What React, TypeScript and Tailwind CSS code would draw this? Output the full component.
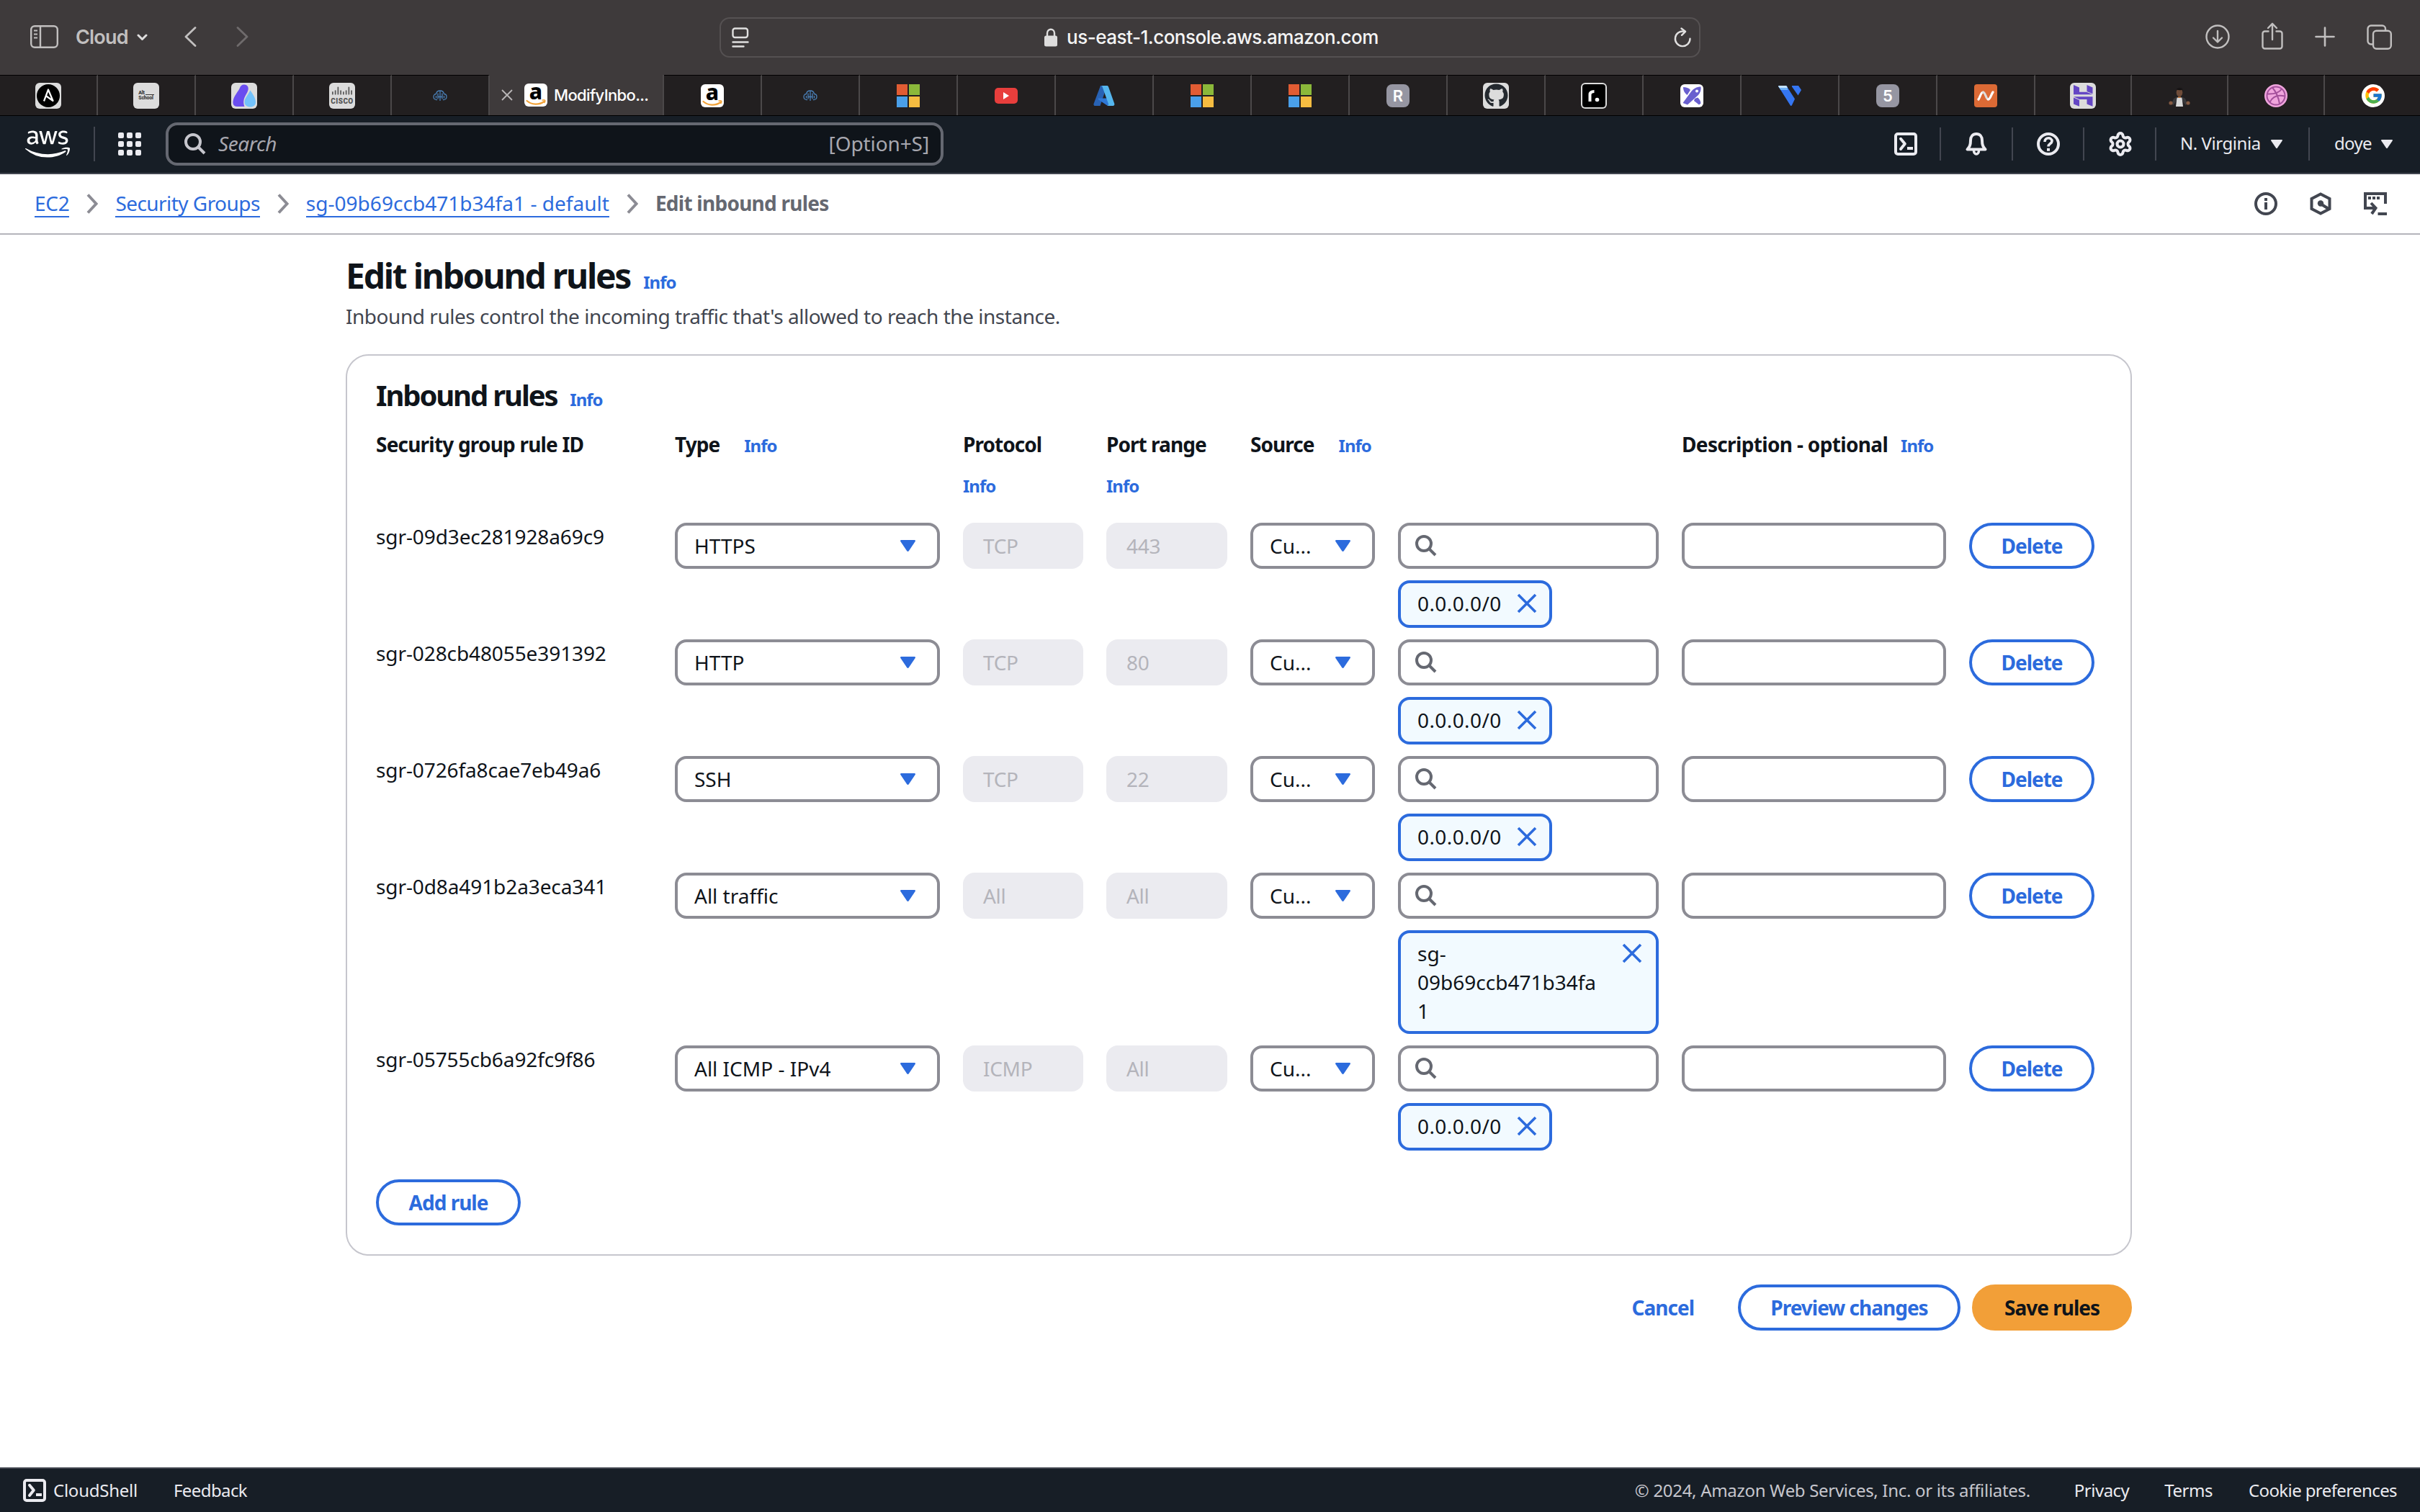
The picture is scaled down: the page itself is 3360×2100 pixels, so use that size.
import type { ReactNode } from "react";
import { FaAws, FaGithub } from "react-icons/fa";
import { FcGoogle } from "react-icons/fc";
import { Settings } from "lucide-react";

/* ---------- Favicons ---------- */

function Tile({ children, className = "" }: { children: ReactNode; className?: string }) {
  return (
    <span className={`flex size-9 items-center justify-center overflow-hidden rounded-[6px] bg-[#dcdcdc] ${className}`}>
      {children}
    </span>
  );
}

const Ansible = () => (
  <Tile>
    <svg viewBox="0 0 36 36" className="size-9">
      <circle cx="18" cy="18" r="16" fill="#000" />
      <path d="M12 25.5 18 9.5 24.5 25 14 17.5" fill="none" stroke="#fff" strokeWidth="2.2" strokeLinejoin="round" />
    </svg>
  </Tile>
);

const AltSchool = () => (
  <Tile>
    <span className="flex flex-col items-start font-[Roboto] text-[7px] leading-[7px] font-extrabold tracking-[-0.2px] text-[#333]">
      <span className="flex items-end">
        Alt<span className="mb-[1px] ml-[1px] h-[1px] w-[12px] bg-[#333]" />
      </span>
      <span>School</span>
    </span>
  </Tile>
);

const Drop = () => (
  <Tile>
    <svg viewBox="0 0 36 36" className="size-9">
      <path d="M18 2.5c4 0 6.500 3 5.600 7-1 5-5.600 9-6.300 16-.2 3 .2 5 1.200 7.500H8c-4 0-6-3-5.500-7C3.500 18 10 12 12 7c1-3 3-4.500 6-4.500Z" fill="#6a4df0" />
      <path d="M26.500 10.500C30 16 34 21 34 27c0 4-3 6.500-7.500 6.500S18.500 31 18.500 27c0-6 5-10 8-16.500Z" fill="#73c2fb" />
    </svg>
  </Tile>
);

const Cisco = () => (
  <Tile>
    <span className="flex flex-col items-center gap-[3px]">
      <svg viewBox="0 0 32 13" className="h-[13px] w-[30px]" stroke="#555" strokeWidth="1.800" strokeLinecap="round">
        <path d="M2 8v3M6 6v5M10 1v10M14 6v5M18 8v3M22 6v5M26 1v10M30 6v5" />
      </svg>
      <span className="font-[Roboto] text-[10px] leading-[9px] font-black tracking-[0.4px] text-[#555]">CISCO</span>
    </span>
  </Tile>
);

const CloudBrain = () => (
  <svg viewBox="0 0 20 16" className="h-4 w-5" fill="none" stroke="#4a80b8" strokeWidth="1.300">
    <path d="M6 13.500C3 14 1 12 1 9.500S2.500 5.500 4.500 5.500C5 2.500 7.500 1 10 1s5 1.500 5.500 4.500c2 0 3.500 1.500 3.500 4s-2 4.500-5 4" />
    <path d="M10 1v14M7 4.500v8M13 4.500v8M4.500 8v3.500M15.500 8v3.500M7 9.500h6" />
  </svg>
);

const Amazon = () => (
  <span className="flex size-8 items-center justify-center rounded-[6px] bg-white">
    <svg viewBox="0 0 32 32" className="size-8 overflow-visible">
      <text x="16" y="22" textAnchor="middle" fontFamily="Noto Sans" fontWeight="800" fontSize="30" fill="#000">
        a
      </text>
      <path d="M3.500 24c7 6 17 6 24 1" fill="none" stroke="#f2a33a" strokeWidth="2.200" strokeLinecap="round" />
      <path d="M24.500 23.200c2-.6 3.500-.5 4 0s0 2.300-1 3.800" fill="none" stroke="#f2a33a" strokeWidth="1.600" />
    </svg>
  </span>
);

const Microsoft = () => (
  <span className="grid size-8 grid-cols-2 gap-[2px]">
    <span className="bg-[#e15c33]" />
    <span className="bg-[#8bb83a]" />
    <span className="bg-[#4a9fe9]" />
    <span className="bg-[#f5bc41]" />
  </span>
);

const YouTube = () => (
  <span className="flex h-[22px] w-8 items-center justify-center rounded-[5px] bg-[#e83e3c]">
    <svg viewBox="0 0 8 10" className="h-[10px] w-2" fill="#fff">
      <path d="M0 0 8 5 0 10Z" />
    </svg>
  </span>
);

const Azure = () => (
  <svg viewBox="0 0 30 28" className="h-7 w-[30px]">
    <path d="M10 0h9L9.500 28H2.500C1 28 0 26.500.600 25Z" fill="#2862b4" />
    <path d="M7 17.500h12l4 9-3 1.500L6.500 19Z" fill="#2f78d6" />
    <path d="M11.500 0H19c1 0 1.600.600 2 1.500L29.300 25c.5 1.500-.5 3-2 3h-8c1.500-.3 2-1.500 1.600-3L12.500 1.500C12.300.8 12 .3 11.500 0Z" fill="#55b6ee" />
  </svg>
);

const Letter = ({ children }: { children: string }) => (
  <span className="flex size-8 items-center justify-center rounded-[8px] bg-[#9696a2] font-[Inter] text-[22px] leading-none font-semibold text-white">
    {children}
  </span>
);

const GitHub = () => (
  <Tile>
    <FaGithub className="size-[33px] text-[#24292f]" />
  </Tile>
);

const RDot = () => (
  <Tile>
    <span className="flex size-8 items-center justify-center rounded-[4px] bg-black">
      <svg viewBox="0 0 32 32" className="size-8" fill="none" stroke="#fff" strokeWidth="4">
        <path d="M10.500 24V14.500c0-3 2-4.500 6-4.500" />
        <circle cx="20.500" cy="21.500" r="2.800" fill="#fff" stroke="none" />
      </svg>
    </span>
  </Tile>
);

const XMark = () => (
  <span className="flex size-8 overflow-hidden rounded-[6px] bg-white">
    <svg viewBox="0 0 32 32" className="size-8">
      <path d="M4 4c4 0 8 1 10 4l-4.500 7C5.500 12 4 8 4 4Z" fill="#6a60cf" />
      <path d="M20 20l4-1.500c2 1.500 4 4 4.500 8L26 28.500 19 23Z" fill="#6a60cf" />
      <path d="M28.500 3.500c.5 4-.5 8-3.500 11.500L10 28.500 3.500 26 14.500 11c3.500-5 8-7.500 14-7.500Z" fill="#6a60cf" />
      <circle cx="23" cy="9.500" r="2" fill="#fff" />
    </svg>
  </span>
);

const VMark = () => (
  <svg viewBox="0 0 32 28" className="h-7 w-8">
    <path d="M1 0h9c1 0 1.800.5 2.200 1.500L23 18.500 19 27c-.5 1.200-2 1.200-2.500 0L.5 1.500C0 .5.500 0 1 0Z" fill="#3576f2" />
    <path d="M1 0h9c1 0 1.800.5 2.200 1.500L13.500 6H3.300L.5 1.500C0 .5.500 0 1 0Z" fill="#6fb2f8" />
    <path d="M1 0h9c1 0 1.800.5 2.200 1.500L12.700 3H1.500L.5 1.500C0 .5.500 0 1 0Z" fill="#c4e2fc" />
    <path d="M20 0h8l4 6-4.500 7.500L19 1.500C18.500.5 19 0 20 0Z" fill="#3576f2" />
  </svg>
);

const NMark = () => (
  <span className="flex size-8 items-center justify-center rounded-[4px] bg-[#dc6a35]">
    <svg viewBox="0 0 24 14" className="h-[14px] w-6" fill="none" strokeLinecap="round" strokeLinejoin="round" strokeWidth="3.200">
      <path d="M2 12C4 10 5 2 8.500 2" stroke="#fff" />
      <path d="M8.500 2C11.500 2 12.500 12 15.500 12" stroke="#ddd" />
      <path d="M15.500 12C18.500 12 20 4 22 2" stroke="#fff" />
    </svg>
  </span>
);

const Hostinger = () => (
  <Tile>
    <svg viewBox="0 0 36 36" className="size-9" fill="#6446c4">
      <path d="M5 3l8 3.500v6.200h10l8.500 3.600H5Z" />
      <path d="M23.500 3l8 3.500v8.800l-8-3.300Z" />
      <path d="M5 19.300h26.500v13.500l-8-3.300V23H13Z" />
      <path d="M5 20.500l8 3.500v8.800l-8-3.300Z" />
    </svg>
  </Tile>
);

const Person = () => (
  <svg viewBox="0 0 32 28" className="h-7 w-8 translate-y-[2px]">
    <path d="M12 3c0-3 8-3.500 8.500 0v3H12Z" fill="#1d1a1b" />
    <ellipse cx="16" cy="7.500" rx="4.300" ry="5.500" fill="#6f4c39" />
    <path d="M12 3.500c1-2.500 7-2.500 8.300 0-2 1-6 1-8.300 0Z" fill="#141213" />
    <path d="M12.500 14.500h7l1.500 12.500H11Z" fill="#d9d9d9" />
    <path d="M12.500 13.500 8 16l-3 7 2.500 2 4-5Z" fill="#39383b" />
    <path d="M19.500 13.500 24 16l3 7-2.500 2-4-5Z" fill="#39383b" />
    <circle cx="4" cy="22" r="2.600" fill="#855a42" />
    <circle cx="28" cy="22" r="2.600" fill="#855a42" />
    <path d="M14 13.500h4v1.500h-4Z" fill="#c97a3f" />
  </svg>
);

const Dribbble = () => (
  <svg viewBox="0 0 32 32" className="size-8">
    <circle cx="16" cy="16" r="16" fill="#f0a5dd" />
    <g fill="none" stroke="#a3509b" strokeWidth="2">
      <circle cx="16" cy="16" r="12.500" />
      <path d="M11 4.500c5 6 8.500 13 10 22.500M3.500 13.500c9 .5 17-1.500 21-7.500M7.500 25c3.500-7.500 10.500-11 20.800-8.500" />
    </g>
  </svg>
);

const Google = () => (
  <span className="flex size-8 items-center justify-center rounded-full bg-white">
    <FcGoogle className="size-[27px]" />
  </span>
);

const leftTabs: { icon: ReactNode }[] = [
  { icon: <Ansible /> },
  { icon: <AltSchool /> },
  { icon: <Drop /> },
  { icon: <Cisco /> },
  { icon: <CloudBrain /> },
];

const midTabs: { icon: ReactNode }[] = [
  { icon: <Amazon /> },
  { icon: <CloudBrain /> },
  { icon: <Microsoft /> },
  { icon: <YouTube /> },
  { icon: <Azure /> },
  { icon: <Microsoft /> },
  { icon: <Microsoft /> },
  { icon: <Letter>R</Letter> },
  { icon: <GitHub /> },
  { icon: <RDot /> },
  { icon: <XMark /> },
  { icon: <VMark /> },
  { icon: <Letter>5</Letter> },
  { icon: <NMark /> },
];

const endTabs: { icon: ReactNode }[] = [
  { icon: <Hostinger /> },
  { icon: <Person /> },
  { icon: <Dribbble /> },
  { icon: <Google /> },
];

function Tab({ children, className }: { children: ReactNode; className: string }) {
  return (
    <div className={`flex shrink-0 items-center justify-center border-t border-r-2 border-t-black border-r-[#4b4849] bg-[#221f20] ${className}`}>
      {children}
    </div>
  );
}

/* ---------- Shared icons ---------- */

const Caret = ({ className }: { className: string }) => (
  <svg viewBox="0 0 20 16" className={className} preserveAspectRatio="none">
    <path d="M1.500 0h17c1.200 0 1.800 1 1.200 2l-8.500 13.300c-.6.900-1.800.9-2.400 0L.3 2C-.3 1 .3 0 1.500 0Z" fill="currentColor" />
  </svg>
);

const SearchIcon = ({ className }: { className: string }) => (
  <svg viewBox="0 0 30 30" className={className} fill="none" stroke="currentColor" strokeWidth="4">
    <circle cx="12" cy="12" r="10" />
    <path d="m19 19 9 9" />
  </svg>
);

const CloseIcon = () => (
  <svg viewBox="0 0 28 28" className="size-7 shrink-0 text-[#2c6bdd]" fill="none" stroke="currentColor" strokeWidth="3.600">
    <path d="m2 2 24 24M26 2 2 26" />
  </svg>
);

const TerminalIcon = () => (
  <svg viewBox="0 0 32 32" className="size-8" fill="none" stroke="#ebebf0" strokeWidth="4" strokeLinejoin="round">
    <rect x="2" y="2" width="28" height="28" rx="3" />
    <path d="m9 8.800 5.800 7L9 23" strokeLinecap="round" />
    <path d="M18 22h8" />
  </svg>
);

const Chevron = () => (
  <svg viewBox="0 0 16 28" className="h-7 w-4" fill="none" stroke="#8c8c94" strokeWidth="4">
    <path d="m2 1.500 11.500 12.500L2 26.500" />
  </svg>
);

/* ---------- Browser chrome ---------- */

function Toolbar() {
  return (
    <div className="flex h-[104px] shrink-0 items-center bg-[#3e3a3b] pb-[2px] font-[Inter,sans-serif] text-[#c1bfbf]">
      <div className="flex w-[999px] items-center pl-[42px]">
        <svg viewBox="0 0 39 32" className="h-8 w-[39px]" fill="none" stroke="currentColor" strokeWidth="2.400">
          <rect x="1.200" y="1.200" width="36.600" height="29.600" rx="5" />
          <path d="M14 1v30" />
          <path d="M5 7.500h5M5 12.500h5M5 17.500h5" strokeWidth="2" />
        </svg>
        <span className="ml-[24px] w-[85px] text-[27px] leading-none font-semibold tracking-[-0.8px]">Cloud</span>
        <svg viewBox="0 0 15 10" className="mt-[2px] h-[10px] w-[15px]" fill="none" stroke="#dedddd" strokeWidth="3" strokeLinecap="round" strokeLinejoin="round">
          <path d="m2 2 5.500 5.500L13 2" />
        </svg>
        <svg viewBox="0 0 17 28" className="ml-[51px] h-7 w-[17px]" fill="none" stroke="currentColor" strokeWidth="2.800" strokeLinecap="round" strokeLinejoin="round">
          <path d="M15 1.500 2 14l13 12.500" />
        </svg>
        <svg viewBox="0 0 17 28" className="ml-[55px] h-7 w-[17px]" fill="none" stroke="#6f6b6c" strokeWidth="2.800" strokeLinecap="round" strokeLinejoin="round">
          <path d="m2 1.500 13 12.500L2 26.500" />
        </svg>
      </div>

      <div className="mt-[2px] flex h-14 w-[1362px] items-center rounded-[14px] border-2 border-[#555152] pr-[11px] pl-[15px]">
        <svg viewBox="0 0 24 28" className="h-7 w-6" fill="none" stroke="#e0dfdf" strokeWidth="2.400" strokeLinecap="round">
          <rect x="1.500" y="1.500" width="20.500" height="12.500" rx="3" />
          <path d="M1.500 20.500h21M1.500 26.500h15" />
        </svg>
        <div className="flex flex-1 items-center justify-center">
          <svg viewBox="0 0 18 26" className="mr-[13px] h-[26px] w-[18px]">
            <path d="M4 12V7c0-7 10-7 10 0v5" fill="none" stroke="#dedddd" strokeWidth="2.400" />
            <rect x="0" y="10.500" width="18" height="15" rx="2.500" fill="#dedddd" />
          </svg>
          <span className="text-[26px] leading-none font-medium tracking-[-0.5px] text-[#f4f4f4]">us-east-1.console.aws.amazon.com</span>
        </div>
        <svg viewBox="0 0 24 28" className="h-7 w-6" fill="none" stroke="#e0dfdf" strokeWidth="2.400" strokeLinecap="round" strokeLinejoin="round">
          <path d="M14.500 5.800a10.300 10.300 0 1 0 8 10" />
          <path d="m10.500 1.500 5.500 4.300-5 5" />
        </svg>
      </div>

      <div className="flex flex-1 items-center justify-end gap-[44px] pr-[39px]">
        <svg viewBox="0 0 34 34" className="size-[34px]" fill="none" stroke="currentColor" strokeWidth="2.400" strokeLinecap="round" strokeLinejoin="round">
          <circle cx="17" cy="17" r="15.500" />
          <path d="M17 9v15M11 18.500l6 6 6-6" />
        </svg>
        <svg viewBox="0 0 30 38" className="-mt-[2px] h-[38px] w-[30px]" fill="none" stroke="currentColor" strokeWidth="2.400" strokeLinecap="round" strokeLinejoin="round">
          <path d="M9.500 12.500H4.500a3 3 0 0 0-3 3v18a3 3 0 0 0 3 3h21a3 3 0 0 0 3-3v-18a3 3 0 0 0-3-3h-5" />
          <path d="M15 24V2M9 8l6-6.200L21 8" />
        </svg>
        <svg viewBox="0 0 28 28" className="size-7" fill="none" stroke="currentColor" strokeWidth="2.600" strokeLinecap="round">
          <path d="M14 1.500v25M1.500 14h25" />
        </svg>
        <svg viewBox="0 0 35 35" className="size-[35px]" fill="none" stroke="currentColor" strokeWidth="2.400">
          <path d="M8.500 27.500H6a4.500 4.500 0 0 1-4.500-4.500V6A4.500 4.500 0 0 1 6 1.500h15.500A4.500 4.500 0 0 1 26 6v2.500" />
          <rect x="9" y="8.800" width="24.800" height="25" rx="4.500" />
        </svg>
      </div>
    </div>
  );
}

function TabBar() {
  return (
    <div className="flex h-[57px] shrink-0 border-b border-black bg-[#221f20]">
      {leftTabs.map((t, i) => (
        <Tab key={i} className="w-[136px]">
          {t.icon}
        </Tab>
      ))}
      <div className="flex w-[242px] shrink-0 items-center border-r-2 border-[#4b4849] bg-[#3e3a3b] pl-4">
        <svg viewBox="0 0 16 16" className="size-4" fill="none" stroke="#b9b6b7" strokeWidth="1.800">
          <path d="m1 1 14 14M15 1 1 15" />
        </svg>
        <span className="ml-4">
          <Amazon />
        </span>
        <span className="ml-[9px] font-[Inter,sans-serif] text-[22px] leading-none font-medium tracking-[-0.65px] text-white">ModifyInbo...</span>
      </div>
      {midTabs.map((t, i) => (
        <Tab key={i} className="w-[136px]">
          {t.icon}
        </Tab>
      ))}
      {endTabs.map((t, i) => (
        <Tab key={i} className="w-[134px] last:border-r-0">
          {t.icon}
        </Tab>
      ))}
    </div>
  );
}

/* ---------- AWS console ---------- */

const Divider = () => <span className="h-[46px] w-[2px] shrink-0 bg-[#424650]" />;

function ConsoleNav() {
  return (
    <div className="flex h-[81px] shrink-0 items-center border-b-2 border-[#424650] bg-[#171e26] pb-[1px] text-[#ebebf0]">
      <FaAws className="ml-[35px] h-[50px] w-[62px] text-white" />
      <span className="mr-8 ml-[33px]">
        <span className="block h-12 w-[2px] bg-[#424650]" />
      </span>
      <div className="grid size-8 grid-cols-3 gap-1">
        {Array.from({ length: 9 }, (_, i) => (
          <span key={i} className="size-2 rounded-[2px] bg-[#ebebf0]" />
        ))}
      </div>
      <div className="ml-[34px] flex h-[60px] w-[1080px] items-center rounded-[16px] border-4 border-[#656871] bg-[#0f141a] pr-4 pl-[22px] text-[28px] leading-none">
        <SearchIcon className="size-[30px] text-[#c6c6cd]" />
        <span className="ml-[17px] pb-[2px] tracking-[-0.4px] text-[#a7a7af] italic">Search</span>
        <span className="ml-auto pb-[2px] tracking-[-0.1px] text-[#a7a7af]">[Option+S]</span>
      </div>
      <div className="ml-auto flex items-center text-[24px] leading-none">
        <span className="flex w-[96px] justify-center pl-[2px]">
          <TerminalIcon />
        </span>
        <Divider />
        <span className="flex w-[98px] justify-center">
          <svg viewBox="0 0 32 32" className="size-8" fill="none" stroke="#ebebf0" strokeWidth="4" strokeLinejoin="round">
            <path d="M16 2c-5 0-8 4-8 9 0 7-1.500 9-4.500 12.500h25C25.500 20 24 18 24 11c0-5-3-9-8-9Z" />
            <path d="M12.500 25c0 6.500 7 6.500 7 0" strokeWidth="3.500" />
          </svg>
        </span>
        <Divider />
        <span className="flex w-[97px] justify-center">
          <svg viewBox="0 0 32 32" className="size-8" fill="none" stroke="#ebebf0" strokeWidth="4">
            <circle cx="16" cy="16" r="14" />
            <path d="M11 13c0-7 10-6.500 10-1 0 3.500-5 3.500-5 7.500" strokeWidth="3.600" />
            <path d="M16 21.800v4" />
          </svg>
        </span>
        <Divider />
        <span className="flex w-[98px] justify-center pl-[2px]">
          <Settings className="size-9" strokeWidth={2.7} />
        </span>
        <Divider />
        <span className="flex w-[211px] items-center pl-[33px]">
          <span className="w-[126px] pb-[2px] tracking-[-0.45px]">N. Virginia</span>
          <Caret className="h-3 w-4" />
        </span>
        <Divider />
        <span className="flex w-[153px] items-center pl-[34px]">
          <span className="w-[65px] pb-[2px] tracking-[-0.65px]">doye</span>
          <Caret className="h-3 w-4" />
        </span>
      </div>
    </div>
  );
}

const crumbs = [
  { label: "EC2", className: "tracking-[-0.3px]" },
  { label: "Security Groups", className: "tracking-[-0.55px]" },
  { label: "sg-09b69ccb471b34fa1 - default", className: "tracking-[0.03px]" },
];

function Breadcrumbs() {
  return (
    <div className="flex h-[84px] shrink-0 items-center gap-6 border-b-2 border-[#b4b4bb] pr-[46px] pl-12 text-[28px] leading-[36px]">
      {crumbs.map((c) => (
        <span key={c.label} className="flex items-center gap-6">
          <a className={`border-b-2 border-[#2c6bdd] whitespace-nowrap text-[#2c6bdd] ${c.className}`}>{c.label}</a>
          <Chevron />
        </span>
      ))}
      <span className="pb-[2px] font-bold tracking-[-0.75px] text-[#656871]">Edit inbound rules</span>
      <div className="ml-auto flex items-center gap-[45px]">
        <svg viewBox="0 0 32 32" className="size-8" fill="none" stroke="#424650" strokeWidth="4">
          <circle cx="16" cy="16" r="14" />
          <path d="M16 8v4M16 14v10" />
        </svg>
        <svg viewBox="0 0 30 32" className="h-8 w-[30px]" fill="none" stroke="#424650" strokeWidth="4">
          <path d="M15 2.500 27.500 9v14L15 29.500 2.500 23V9Z" />
          <circle cx="15" cy="15.500" r="4.200" fill="#424650" stroke="none" />
          <path d="m15 16 11 7" />
        </svg>
        <svg viewBox="0 0 32 32" className="size-8" fill="none" stroke="#424650" strokeWidth="4">
          <path d="M30 16V2H2v20h13" />
          <path d="M6 8h4M12 8h4M18 8h4" />
          <path d="m10 15 6.500 7L11 30M19.500 30H32" />
        </svg>
      </div>
    </div>
  );
}

const Info = ({ className = "" }: { className?: string }) => (
  <a className={`text-[24px] leading-10 font-bold tracking-[-1px] text-[#2c6bdd] ${className}`}>Info</a>
);

function Button({ children, className = "", primary = false }: { children: ReactNode; className?: string; primary?: boolean }) {
  return (
    <button
      type="button"
      className={`flex h-16 items-center justify-center rounded-full border-4 text-[28px] leading-10 font-bold tracking-[-1px] ${
        primary ? "border-[#f29f38] bg-[#f29f38] text-[#0f141a]" : "border-[#2c6bdd] bg-white text-[#2c6bdd]"
      } ${className}`}
    >
      {children}
    </button>
  );
}

const Select = ({ value }: { value: string }) => (
  <div className="flex h-16 items-center justify-between rounded-[16px] border-4 border-[#8c8c94] bg-white pr-[30px] pl-[23px]">
    <span>{value}</span>
    <Caret className="h-4 w-[21px] text-[#2c6bdd]" />
  </div>
);

const Disabled = ({ value }: { value: string }) => (
  <div className="flex h-16 items-center rounded-[16px] bg-[#ebebf0] pl-[28px] tracking-[-0.3px] text-[#b4b4bb]">{value}</div>
);

interface Rule {
  id: string;
  type: string;
  protocol: string;
  port: string;
  source: string[];
}

const rules: Rule[] = [
  { id: "sgr-09d3ec281928a69c9", type: "HTTPS", protocol: "TCP", port: "443", source: ["0.0.0.0/0"] },
  { id: "sgr-028cb48055e391392", type: "HTTP", protocol: "TCP", port: "80", source: ["0.0.0.0/0"] },
  { id: "sgr-0726fa8cae7eb49a6", type: "SSH", protocol: "TCP", port: "22", source: ["0.0.0.0/0"] },
  { id: "sgr-0d8a491b2a3eca341", type: "All traffic", protocol: "All", port: "All", source: ["sg-", "09b69ccb471b34fa", "1"] },
  { id: "sgr-05755cb6a92fc9f86", type: "All ICMP - IPv4", protocol: "ICMP", port: "All", source: ["0.0.0.0/0"] },
];

function Token({ lines }: { lines: string[] }) {
  const wide = lines.length > 1;
  return (
    <div
      className={`mt-4 flex items-start justify-between rounded-[16px] border-4 border-[#2c6bdd] bg-[#f2faff] pl-[23px] ${
        wide ? "h-[144px] pt-[8px] pr-[19px]" : "h-[66px] w-[214px] pt-[8px] pr-[17px]"
      }`}
    >
      <span className={wide ? "" : "tracking-[0.4px]"}>
        {lines.map((l) => (
          <span key={l} className="block">
            {l}
          </span>
        ))}
      </span>
      <span className="pt-[6px]">
        <CloseIcon />
      </span>
    </div>
  );
}

const columns = "grid grid-cols-[383px_368px_167px_168px_173px_362px_367px_174px] gap-x-8";

function RulesCard() {
  return (
    <section className="mt-[33px] rounded-[32px] border-2 border-[#c6c6cd] px-10 pt-[31px] pb-10 text-[#0f141a]">
      <div className="flex items-baseline">
        <h2 className="text-[40px] leading-[48px] font-bold tracking-[-2.15px]">Inbound rules</h2>
        <Info className="ml-[18px]" />
      </div>

      <div className={`${columns} mt-[22px] h-[129px] text-[28px] leading-10 font-bold tracking-[-0.95px]`}>
        <span className="tracking-[-0.8px]">Security group rule ID</span>
        <span className="flex items-baseline gap-[34px]">
          Type <Info />
        </span>
        <span className="flex flex-col gap-[18px]">
          Protocol <Info />
        </span>
        <span className="flex flex-col gap-[18px]">
          Port range <Info />
        </span>
        <span className="flex items-baseline gap-[34px]">
          Source <Info />
        </span>
        <span />
        <span className="flex items-baseline gap-[18px] tracking-[-0.66px] whitespace-nowrap">
          Description - optional <Info />
        </span>
      </div>

      <div className="flex flex-col gap-4 text-[28px] leading-10">
        {rules.map((r) => (
          <div key={r.id} className={columns}>
            <span className="leading-[38px] tracking-[-0.1px]">{r.id}</span>
            <Select value={r.type} />
            <Disabled value={r.protocol} />
            <Disabled value={r.port} />
            <Select value="Cu..." />
            <div>
              <div className="flex h-16 items-center rounded-[16px] border-4 border-[#8c8c94] bg-white pl-5">
                <SearchIcon className="size-[30px] text-[#656871]" />
              </div>
              <Token lines={r.source} />
            </div>
            <div className="h-16 rounded-[16px] border-4 border-[#8c8c94] bg-white" />
            <Button>Delete</Button>
          </div>
        ))}
      </div>

      <Button className="mt-10 w-[201px]">Add rule</Button>
    </section>
  );
}

function Footer() {
  return (
    <footer className="flex h-[62px] shrink-0 items-center border-t-2 border-[#424650] bg-[#171e26] pr-8 pl-8 text-[24px] leading-none text-[#ebebf0]">
      <TerminalIcon />
      <span className="ml-[10px] w-[167px] tracking-[-0.25px]">CloudShell</span>
      <span className="tracking-[-0.6px]">Feedback</span>
      <div className="ml-auto flex items-center tracking-[-0.5px]">
        <span className="mr-[61px] tracking-[-0.31px] text-[#c6c6cd]">© 2024, Amazon Web Services, Inc. or its affiliates.</span>
        <span className="mr-[49px]">Privacy</span>
        <span className="mr-[50px]">Terms</span>
        <span className="tracking-[-0.6px]">Cookie preferences</span>
      </div>
    </footer>
  );
}

export default function App() {
  return (
    <div className="flex h-[2100px] w-[3360px] flex-col overflow-hidden bg-white font-['Noto_Sans',sans-serif] whitespace-nowrap">
      <Toolbar />
      <TabBar />
      <ConsoleNav />
      <Breadcrumbs />
      <main className="ml-[480px] w-[2480px] flex-1 pt-[27px]">
        <div className="flex items-baseline">
          <h1 className="text-[48px] leading-[60px] font-bold tracking-[-2.25px] text-[#0f141a]">Edit inbound rules</h1>
          <Info className="ml-[18px]" />
        </div>
        <p className="mt-1.5 text-[28px] leading-10 tracking-[-0.47px] text-[#424650]">
          Inbound rules control the incoming traffic that's allowed to reach the instance.
        </p>
        <RulesCard />
        <div className="mt-10 flex items-center justify-end">
          <span className="mr-[61px] text-[28px] leading-10 font-bold tracking-[-1px] text-[#2c6bdd]">Cancel</span>
          <Button className="mr-4 w-[309px]">Preview changes</Button>
          <Button primary className="w-[222px]">Save rules</Button>
        </div>
      </main>
      <Footer />
    </div>
  );
}
